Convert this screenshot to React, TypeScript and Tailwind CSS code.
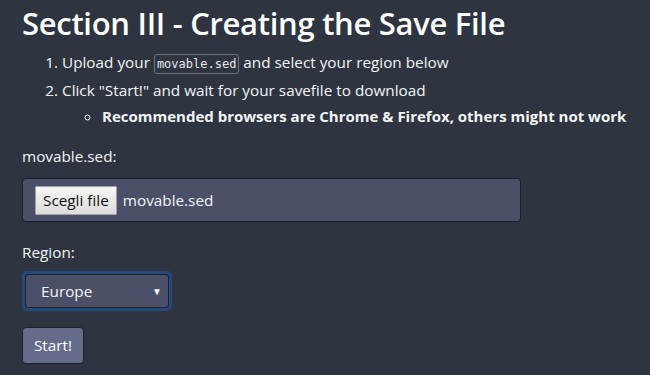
import React from "react";

export default function App() {
  return (
    <div
      className="w-[650px] h-[375px] overflow-hidden bg-[#2e3440] text-[#f3f4f6]"
      style={{ fontFamily: '"Open Sans", "Noto Sans", sans-serif' }}
    >
      <div className="pl-[22px] pt-[2px]">
        <h1 className="text-[31px] font-semibold leading-[42px] text-white tracking-[-0.3px]">
          Section III - Creating the Save File
        </h1>
        <ol className="list-decimal pl-[40px] mt-[4px] text-[15.3px] leading-[28px]">
          <li>
            Upload your{" "}
            <code
              className="inline-block border border-[#6b7280] rounded-[3px] px-[2px] text-[12px] leading-[18px] text-[#e5e7eb]"
              style={{ fontFamily: '"DejaVu Sans Mono", monospace' }}
            >
              movable.sed
            </code>{" "}
            and select your region below
          </li>
          <li>
            Click "Start!" and wait for your savefile to download
            <ul className="list-[circle] pl-[40px] leading-[24px]">
              <li className="font-bold text-[15px]">
                Recommended browsers are Chrome &amp; Firefox, others might not work
              </li>
            </ul>
          </li>
        </ol>
        <div className="mt-[18px] text-[15.3px] leading-[20px]">movable.sed:</div>
        <div className="mt-[12px] w-[499px] h-[44px] bg-[#4b5068] border border-[#1d2129] rounded-[4px] flex items-center pl-[12px] gap-[6px]">
          <button
            className="h-[29px] px-[7px] border border-[#a3a3a3] bg-gradient-to-b from-[#f6f6f6] to-[#dcdcdc] text-[#111] text-[15.3px] rounded-[1px]"
          >
            Scegli file
          </button>
          <span className="text-[15.3px]">movable.sed</span>
        </div>
        <div className="mt-[20px] text-[15.3px] leading-[20px]">Region:</div>
        <div className="mt-[9px] w-[150px] h-[40px] rounded-[5px] border-[3px] border-[#234a7a] bg-[#234a7a]">
          <div className="w-full h-full bg-[#4b5068] border border-[#1d2129] rounded-[3px] flex items-center justify-between pl-[15px] pr-[6px]">
            <span className="text-[15.3px]">Europe</span>
            <span className="text-[10px]">▼</span>
          </div>
        </div>
        <button className="mt-[16px] w-[62px] h-[37px] bg-[#656b8b] border border-[#1d2129] rounded-[4px] text-[15.3px] text-white">
          Start!
        </button>
      </div>
    </div>
  );
}
